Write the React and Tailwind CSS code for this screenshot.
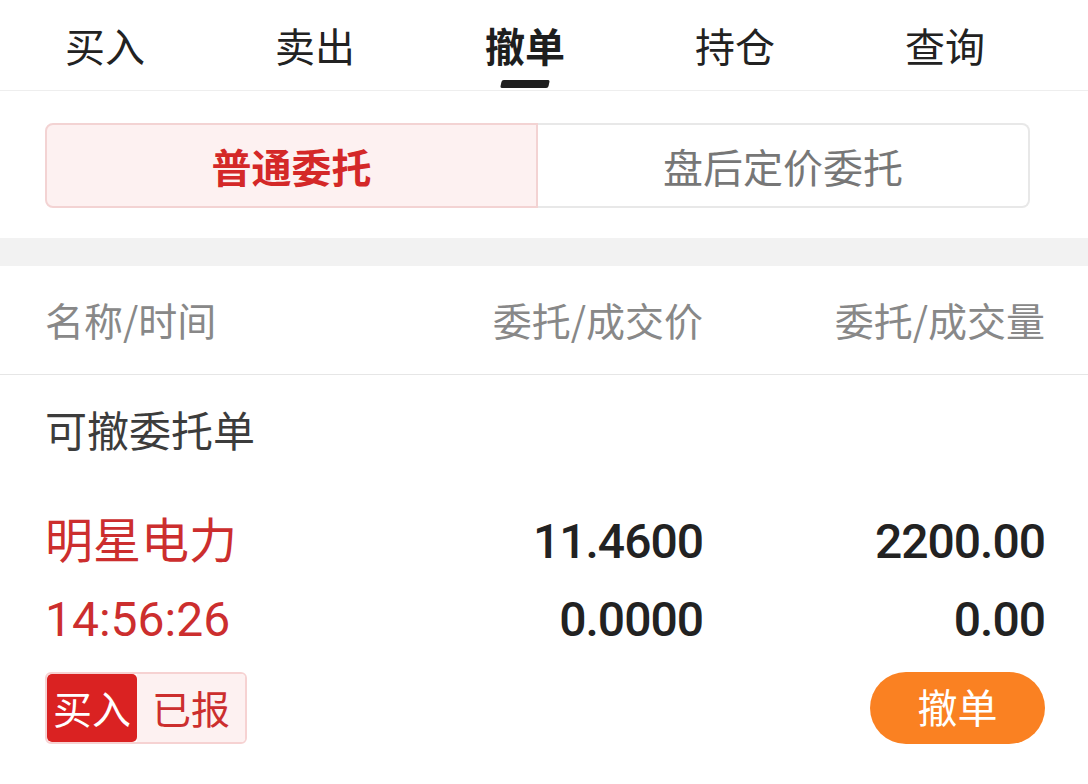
import React from "react";

const CJK = { fontFamily: '"Noto Sans CJK SC", "Noto Sans", sans-serif' };
const NUM = { fontFamily: 'Roboto, "Noto Sans CJK SC", sans-serif' };

export default function App() {
  const tabs = ["买入", "卖出", "撤单", "持仓", "查询"];
  return (
    <div className="w-[1088px] h-[784px] bg-white overflow-hidden" style={CJK}>
      {/* Top tabs */}
      <div className="h-[91px] border-b border-[#eeeeee]">
        <div className="grid grid-cols-5 w-[1050px] h-[90px]">
          {tabs.map((t) => (
            <div key={t} className="relative flex items-center justify-center">
              <span
                className={
                  "text-[40px] leading-none " +
                  (t === "撤单" ? "font-bold text-[#1e1e1e]" : "text-[#222222]")
                }
              >
                {t}
              </span>
              {t === "撤单" && (
                <div className="absolute bottom-[2px] left-1/2 -translate-x-1/2 w-[48px] h-[8px] bg-[#1e1e1e] rounded-[2px] skew-x-[-12deg]" />
              )}
            </div>
          ))}
        </div>
      </div>

      {/* Segmented control */}
      <div className="pt-[32px] pb-[30px] px-[45px]">
        <div className="flex w-[985px] h-[85px]">
          <div className="w-[493px] flex items-center justify-center bg-[#fdf1f1] border-2 border-[#f3d3d3] rounded-l-[8px]">
            <span className="text-[40px] font-bold text-[#d42828] leading-none">普通委托</span>
          </div>
          <div className="flex-1 flex items-center justify-center bg-white border-2 border-l-0 border-[#e8e8e8] rounded-r-[8px]">
            <span className="text-[40px] text-[#777777] leading-none">盘后定价委托</span>
          </div>
        </div>
      </div>

      {/* Gray band */}
      <div className="h-[28px] bg-[#f2f2f2]" />

      {/* Header row */}
      <div className="h-[109px] border-b border-[#e6e6e6] grid grid-cols-[398px_260px_342px] items-center pl-[45px] pr-[43px] text-[39px] text-[#888888] leading-none">
        <span className="-mt-[2px]">名称/时间</span>
        <span className="text-right -mt-[2px]">委托/成交价</span>
        <span className="text-right -mt-[2px]">委托/成交量</span>
      </div>

      {/* Section label */}
      <div className="h-[112px] flex items-center pl-[45px]">
        <span className="text-[42px] text-[#3c3c3c] leading-none -mt-[4px]">可撤委托单</span>
      </div>

      {/* Order row */}
      <div className="pl-[45px] pr-[43px] pt-[17px]">
        <div className="grid grid-cols-[398px_260px_342px] h-[76px] items-center">
          <span className="text-[48px] text-[#cc2e2e] leading-none -mt-[10px]">明星电力</span>
          <span className="text-right text-[48px] font-medium text-[#222222] leading-none tracking-[-1px]" style={NUM}>
            11.4600
          </span>
          <span className="text-right text-[48px] font-medium text-[#222222] leading-none tracking-[-1px]" style={NUM}>
            2200.00
          </span>
        </div>
        <div className="grid grid-cols-[398px_260px_342px] h-[80px] items-center">
          <span className="text-[48px] text-[#cc2e2e] leading-none" style={NUM}>
            14:56:26
          </span>
          <span className="text-right text-[48px] font-medium text-[#222222] leading-none tracking-[-1px]" style={NUM}>
            0.0000
          </span>
          <span className="text-right text-[48px] font-medium text-[#222222] leading-none tracking-[-1px]" style={NUM}>
            0.00
          </span>
        </div>
        <div className="mt-[12px] h-[72px] flex items-center justify-between">
          <div className="flex h-[72px] w-[202px] rounded-[6px] border-2 border-[#f6d2d2] overflow-hidden">
            <div className="w-[90px] bg-[#da2222] rounded-[5px] flex items-center justify-center">
              <span className="text-[39px] text-white leading-none -mt-[2px]">买入</span>
            </div>
            <div className="flex-1 bg-[#fdf1f1] flex items-center justify-center">
              <span className="text-[39px] text-[#cc2e2e] leading-none -mt-[2px]">已报</span>
            </div>
          </div>
          <button className="w-[175px] h-[72px] rounded-full bg-[#fa8122] flex items-center justify-center">
            <span className="text-[40px] text-white leading-none -mt-[4px]">撤单</span>
          </button>
        </div>
      </div>
    </div>
  );
}
